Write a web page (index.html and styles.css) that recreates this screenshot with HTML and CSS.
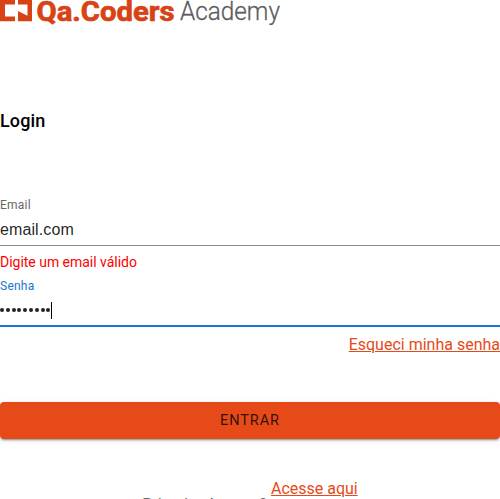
FILE: index.html
```html
<!DOCTYPE html>
<html lang="pt-BR">
<head>
<meta charset="utf-8">
<title>Qa.Coders Academy</title>
<link rel="stylesheet" href="styles.css">
</head>
<body>
<main class="page">
  <header class="brand">
    <svg class="logo" viewBox="0 0 281 30" role="img" aria-label="Qa.Coders Academy">
      <path class="mark" d="M0 0H15V4.5H5V16.5H15V21.3H0ZM18 0H32V21.3H18V11L27.5 15.7V4.5H18Z"/>
      <text class="name" x="36.5" y="20.5" textLength="138" lengthAdjust="spacingAndGlyphs">Qa.Coders</text>
      <text class="academy" x="180" y="20" textLength="100" lengthAdjust="spacingAndGlyphs">Academy</text>
    </svg>
  </header>
  <h1 class="title">Login</h1>
  <form class="form">
    <div class="field">
      <label class="label">Email</label>
      <div class="value">email.com</div>
    </div>
    <p class="error">Digite um email válido</p>
    <div class="field focused">
      <label class="label">Senha</label>
      <div class="value password"><span class="dots"><i></i><i></i><i></i><i></i><i></i><i></i><i></i><i></i><i></i></span><span class="caret"></span></div>
    </div>
    <a class="link forgot">Esqueci minha senha</a>
    <button class="submit" type="button">ENTRAR</button>
  </form>
  <footer class="signup">
    <span class="question">Primeiro Acesso?</span>
    <a class="link access">Acesse aqui</a>
  </footer>
</main>
</body>
</html>
```
FILE: styles.css
```css
* { box-sizing: border-box; }
body { margin: 0; background: #fff; font-family: Roboto, "Liberation Sans", sans-serif; }
.page { width: 500px; height: 499px; overflow: hidden; }
.brand { height: 30px; }
.logo { display: block; width: 281px; height: 30px; overflow: visible; }
.mark { fill: #d84315; }
.name { fill: #d84315; stroke: #d84315; stroke-width: .7px; font: 700 28px Roboto, sans-serif; }
.academy { fill: #5c5c5c; stroke: #5c5c5c; stroke-width: .3px; font: 300 26px Roboto, sans-serif; }
.title { margin: 78px 0 0; font-size: 18px; line-height: 26px; font-weight: 500; letter-spacing: .15px; color: #000; }
.form { display: flex; flex-direction: column; margin-top: 63px; }
.field { height: 49px; border-bottom: 1px solid #8c8c8c; }
.label { display: block; height: 16px; font-size: 12px; line-height: 16px; letter-spacing: .25px; color: #666; }
.value { height: 32px; font: 16px/33px "Liberation Sans", sans-serif; letter-spacing: .1px; color: rgba(0,0,0,.87); }
.error { margin: 8px 0 7px; font-size: 14px; line-height: 17px; letter-spacing: -.02px; color: #f00; }
.focused { border-bottom: 2px solid #1976d2; }
.focused .label { color: #1976d2; }
.password { display: flex; align-items: center; }
.dots { display: flex; gap: 1.8px; }
.dots i { width: 4px; height: 4px; border-radius: 50%; background: #222; }
.caret { width: 1px; height: 17px; margin-left: .5px; background: #000; }
.link { font-size: 16px; line-height: 20px; font-weight: 400; color: #e64a19; text-decoration: underline; }
.forgot { align-self: flex-end; margin-top: 8px; }
.submit { height: 37px; margin-top: 47px; padding: 0; border: 0; border-radius: 4px; background: #e64a19; color: rgba(0,0,0,.8); font: 400 14.5px/37px Roboto, sans-serif; letter-spacing: .9px; box-shadow: 0 3px 1px -2px rgba(0,0,0,.2), 0 2px 2px rgba(0,0,0,.14), 0 1px 5px rgba(0,0,0,.12); }
.signup { display: flex; align-items: flex-start; justify-content: center; gap: 4px; margin-top: 40px; }
.question { margin-top: 16px; font-size: 16px; line-height: 20px; color: #666; }
```
